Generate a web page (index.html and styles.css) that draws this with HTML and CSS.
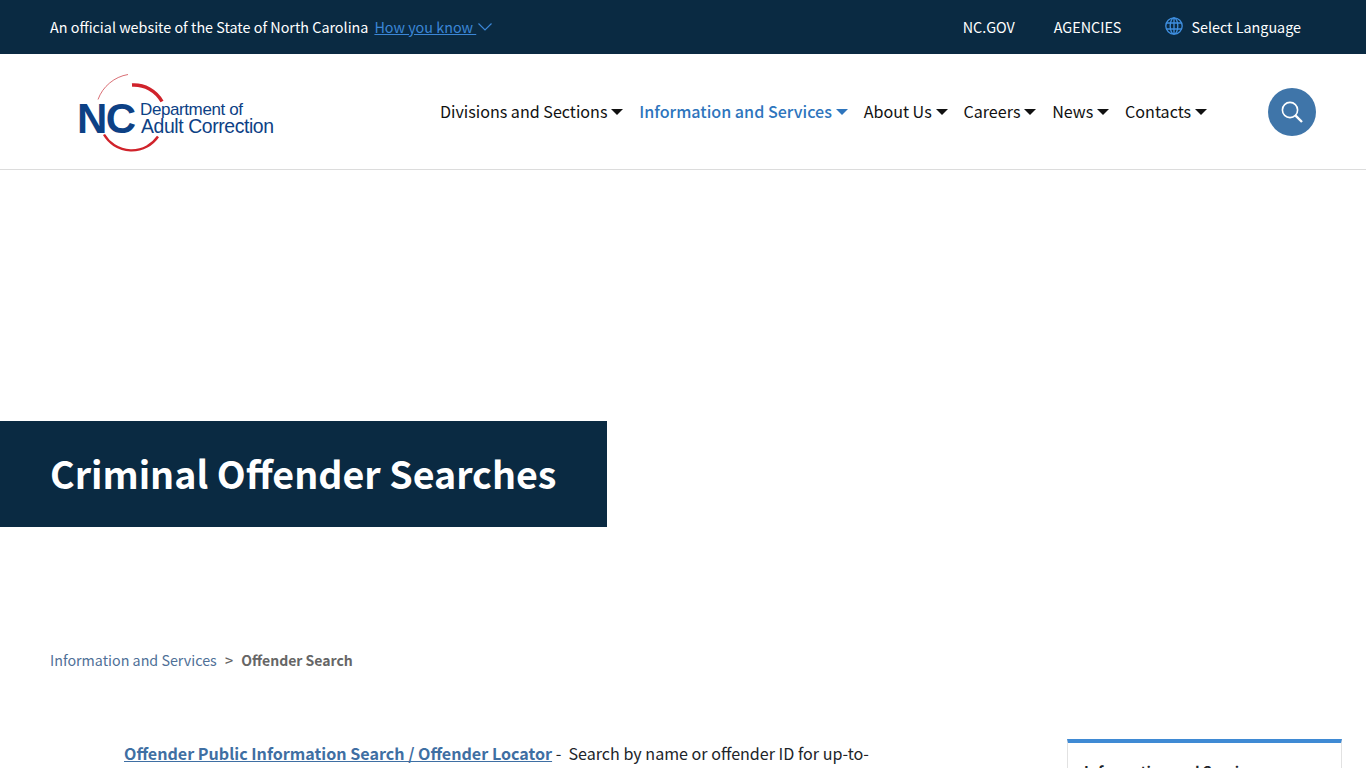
FILE: index.html
```html
<!DOCTYPE html>
<html lang="en">

<head>
    <meta charset="UTF-8">
    <meta name="viewport" content="width=device-width, initial-scale=1.0">
    <title>Criminal Offender Searches</title>
    <link rel="stylesheet" href="styles.css">
</head>

<body>
    <!-- Top bar -->
    <div class="topbar">
        <div class="official">
            <span>An official website of the State of North Carolina</span>
            <a href="#" class="how-link">How you know&nbsp;</a>
            <svg class="how-chevron" width="14" height="8" viewBox="0 0 14 8" fill="none" stroke="#3b86d6" stroke-width="1.2">
                <path d="M0.5 0.5 L7 7 L13.5 0.5" />
            </svg>
        </div>
        <div class="top-links">
            <a href="#">NC.GOV</a>
            <a href="#">AGENCIES</a>
            <a href="#" class="lang">
                <svg width="18" height="18" viewBox="0 0 18 18" fill="none" stroke="#3f8fe0" stroke-width="1.3">
                    <circle cx="9" cy="9" r="8.2" />
                    <ellipse cx="9" cy="9" rx="3.8" ry="8.2" />
                    <path d="M9 0.8 V17.2 M1.4 6 H16.6 M1.4 12 H16.6" />
                </svg>
                <span>Select Language</span>
            </a>
        </div>
    </div>

    <!-- Header -->
    <div class="header">
        <a href="#" class="logo">
            <svg width="200" height="80" viewBox="0 0 200 80">
                <path d="M21 25.5 A39 39 0 0 1 51 0.5" fill="none" stroke="#c9303a" stroke-width="0.7" />
                <path d="M55 11 A32 32 0 0 1 85 27.5" fill="none" stroke="#d0232b" stroke-width="3.4" />
                <path d="M27 60.5 A32 32 0 0 0 81 62.5" fill="none" stroke="#d0232b" stroke-width="2.4" />
                <text x="0" y="59" class="logo-nc">NC</text>
                <text x="63" y="40.5" class="logo-dept">Department of</text>
                <text x="64" y="59" class="logo-adult">Adult Correction</text>
            </svg>
        </a>
        <nav class="nav">
            <a href="#" class="nav-item">Divisions and Sections</a>
            <a href="#" class="nav-item active">Information and Services</a>
            <a href="#" class="nav-item">About Us</a>
            <a href="#" class="nav-item">Careers</a>
            <a href="#" class="nav-item">News</a>
            <a href="#" class="nav-item">Contacts</a>
        </nav>
        <button class="search-btn" aria-label="Search">
            <svg width="24" height="24" viewBox="0 0 24 24" fill="none" stroke="#fff">
                <circle cx="10" cy="10" r="7.6" stroke-width="1.6" />
                <path d="M15.6 15.6 L22 22" stroke-width="2.4" />
            </svg>
        </button>
    </div>

    <!-- Page title -->
    <div class="hero">
        <h1 class="page-title">Criminal Offender Searches</h1>
    </div>

    <!-- Breadcrumb -->
    <div class="breadcrumb">
        <a href="#">Information and Services</a>
        <span class="sep">&gt;</span>
        <strong>Offender Search</strong>
    </div>

    <!-- Content -->
    <div class="main">
        <div class="article">
            <p><a href="#">Offender Public Information Search / Offender Locator</a> -&nbsp; Search by name or offender ID for up-to-</p>
        </div>
        <aside class="sidebar">
            <h2>Information and Services</h2>
        </aside>
    </div>
</body>

</html>
```

FILE: styles.css
```css
/* General */
html,
body {
    height: 768px;
    overflow: hidden;
}

body {
    margin: 0;
    font-family: "Noto Sans CJK SC", "Open Sans", sans-serif;
    color: #212529;
    background-color: #fff;
}

a {
    text-decoration: none;
}

/* Top bar */
.topbar {
    height: 54px;
    background-color: #0a2a42;
    color: #fff;
    display: flex;
    justify-content: space-between;
    align-items: center;
    padding: 0 65px 0 50px;
    font-size: 14.35px;
    line-height: 24px;
}

.official {
    display: flex;
    align-items: center;
}

.how-link {
    color: #3b86d6;
    text-decoration: underline;
    margin-left: 6px;
}

.how-chevron {
    margin-left: 2px;
}

.top-links {
    display: flex;
    align-items: center;
    gap: 39px;
}

.top-links a {
    color: #fff;
}

.lang {
    display: flex;
    align-items: center;
    gap: 8px;
    margin-left: 5px;
}

.lang svg {
    margin-top: -3px;
}

/* Header */
.header {
    height: 115px;
    border-bottom: 1px solid #dcdcdc;
    display: flex;
    align-items: center;
    padding: 0 50px 0 77px;
}

.logo {
    display: block;
    width: 200px;
    height: 80px;
    margin-top: 5px;
}

.logo svg {
    display: block;
}

.logo text {
    font-family: "Liberation Sans", Arial, sans-serif;
    fill: #0d4185;
}

.logo-nc {
    font-size: 42px;
    font-weight: 700;
    letter-spacing: -1.5px;
}

.logo-dept {
    font-size: 17px;
    letter-spacing: -0.4px;
}

.logo-adult {
    font-size: 19.4px;
    letter-spacing: -0.4px;
}

.nav {
    display: flex;
    margin-left: 155px;
}

.nav-item {
    color: #111;
    font-size: 16.1px;
    line-height: 27px;
    padding: 0 7.9px;
    white-space: nowrap;
}

.nav-item::after {
    content: "";
    display: inline-block;
    margin-left: 4px;
    vertical-align: 3px;
    border-top: 6px solid;
    border-left: 6px solid transparent;
    border-right: 6px solid transparent;
}

.nav-item.active {
    color: #2e75bd;
    font-weight: 500;
}

.search-btn {
    width: 48px;
    height: 48px;
    margin-left: auto;
    border: none;
    border-radius: 50%;
    background-color: #3f75a9;
    display: flex;
    align-items: center;
    justify-content: center;
    padding: 0;
}

/* Page title */
.hero {
    height: 251px;
    padding-bottom: 106px;
    position: relative;
}

.page-title {
    position: absolute;
    left: 0;
    top: 251px;
    margin: 0;
    height: 106px;
    padding: 0 51px 0 50px;
    background-color: #0a2a42;
    color: #fff;
    font-size: 37.6px;
    font-weight: 700;
    line-height: 104px;
}

/* Breadcrumb */
.breadcrumb {
    margin-top: 121px;
    padding-left: 50px;
    font-size: 14.3px;
    line-height: 24px;
    color: #666;
}

.breadcrumb a {
    color: #4f7097;
}

.breadcrumb .sep {
    margin: 0 5px;
    font-weight: 500;
}

.breadcrumb strong {
    font-size: 14px;
}

/* Content */
.main {
    display: grid;
    grid-template-columns: 1fr 275px;
    column-gap: 50px;
    padding: 0 24px 0 124px;
    margin-top: 67px;
}

.article p {
    margin: 1px 0 0;
    font-size: 16.1px;
    line-height: 27px;
    white-space: nowrap;
}

.article a {
    color: #3f6fa3;
    font-weight: 700;
    text-decoration: underline;
}

.sidebar {
    border: 1px solid #e2e2e2;
    border-top: 4px solid #3f8ad4;
    padding: 14px 16px;
    height: 200px;
}

.sidebar h2 {
    margin: 0;
    font-size: 14.4px;
    line-height: 27px;
    font-weight: 700;
    color: #212529;
}
```
